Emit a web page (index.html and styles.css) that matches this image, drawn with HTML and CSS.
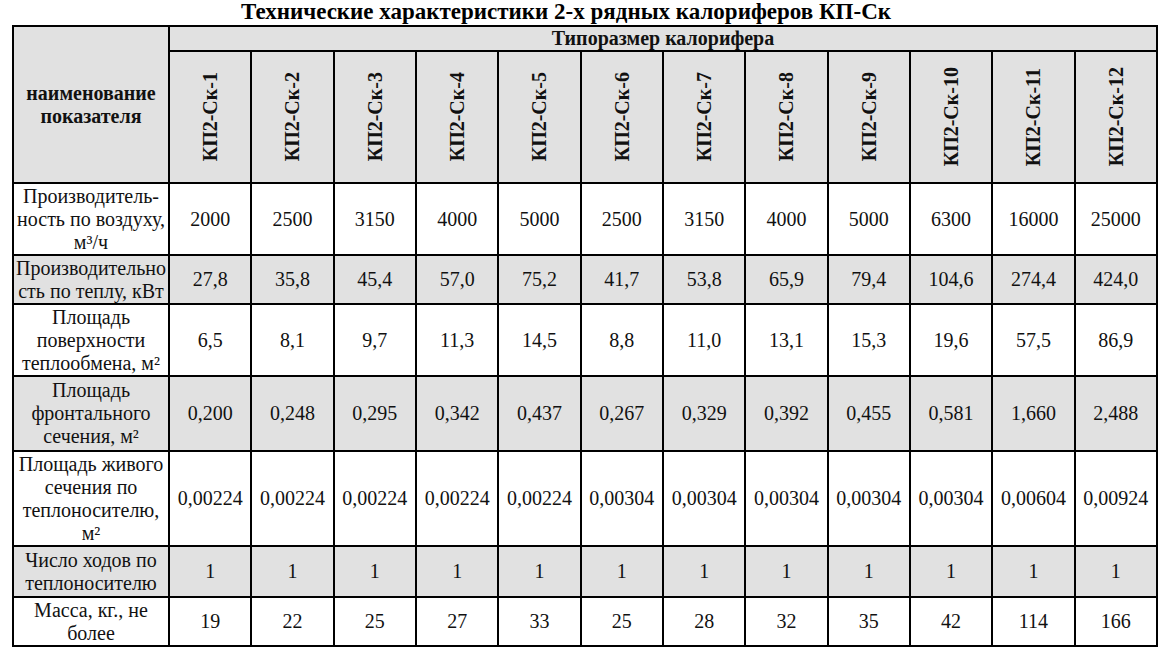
FILE: index.html
```html
<!DOCTYPE html>
<html lang="ru">
<head>
<meta charset="utf-8">
<title>Технические характеристики КП-Ск</title>
<link rel="stylesheet" href="styles.css">
</head>
<body>
<div class="page">
  <h1 class="title">Технические характеристики 2-х рядных калориферов КП-Ск</h1>
  <table class="spec">
    <colgroup>
      <col class="c-name">
      <col><col><col><col><col><col><col><col><col><col><col><col>
    </colgroup>
    <thead>
      <tr class="h1row">
        <th class="name-head" rowspan="2">наименование<br>показателя</th>
        <th class="group-head" colspan="12">Типоразмер калорифера</th>
      </tr>
      <tr class="h2row">
        <th><div class="vert">КП2-Ск-1</div></th>
        <th><div class="vert">КП2-Ск-2</div></th>
        <th><div class="vert">КП2-Ск-3</div></th>
        <th><div class="vert">КП2-Ск-4</div></th>
        <th><div class="vert">КП2-Ск-5</div></th>
        <th><div class="vert">КП2-Ск-6</div></th>
        <th><div class="vert">КП2-Ск-7</div></th>
        <th><div class="vert">КП2-Ск-8</div></th>
        <th><div class="vert">КП2-Ск-9</div></th>
        <th><div class="vert">КП2-Ск-10</div></th>
        <th><div class="vert">КП2-Ск-11</div></th>
        <th><div class="vert">КП2-Ск-12</div></th>
      </tr>
    </thead>
    <tbody>
      <tr class="r1">
        <td class="name">Производитель-<br>ность по воздуху,<br>м³/ч</td>
        <td>2000</td><td>2500</td><td>3150</td><td>4000</td><td>5000</td><td>2500</td><td>3150</td><td>4000</td><td>5000</td><td>6300</td><td>16000</td><td>25000</td>
      </tr>
      <tr class="r2 grey">
        <td class="name">Производительно<br>сть по теплу, кВт</td>
        <td>27,8</td><td>35,8</td><td>45,4</td><td>57,0</td><td>75,2</td><td>41,7</td><td>53,8</td><td>65,9</td><td>79,4</td><td>104,6</td><td>274,4</td><td>424,0</td>
      </tr>
      <tr class="r3">
        <td class="name">Площадь<br>поверхности<br>теплообмена, м²</td>
        <td>6,5</td><td>8,1</td><td>9,7</td><td>11,3</td><td>14,5</td><td>8,8</td><td>11,0</td><td>13,1</td><td>15,3</td><td>19,6</td><td>57,5</td><td>86,9</td>
      </tr>
      <tr class="r4 grey">
        <td class="name">Площадь<br>фронтального<br>сечения, м²</td>
        <td>0,200</td><td>0,248</td><td>0,295</td><td>0,342</td><td>0,437</td><td>0,267</td><td>0,329</td><td>0,392</td><td>0,455</td><td>0,581</td><td>1,660</td><td>2,488</td>
      </tr>
      <tr class="r5">
        <td class="name">Площадь живого<br>сечения по<br>теплоносителю,<br>м²</td>
        <td>0,00224</td><td>0,00224</td><td>0,00224</td><td>0,00224</td><td>0,00224</td><td>0,00304</td><td>0,00304</td><td>0,00304</td><td>0,00304</td><td>0,00304</td><td>0,00604</td><td>0,00924</td>
      </tr>
      <tr class="r6 grey">
        <td class="name">Число ходов по<br>теплоносителю</td>
        <td>1</td><td>1</td><td>1</td><td>1</td><td>1</td><td>1</td><td>1</td><td>1</td><td>1</td><td>1</td><td>1</td><td>1</td>
      </tr>
      <tr class="r7">
        <td class="name">Масса, кг., не<br>более</td>
        <td>19</td><td>22</td><td>25</td><td>27</td><td>33</td><td>25</td><td>28</td><td>32</td><td>35</td><td>42</td><td>114</td><td>166</td>
      </tr>
    </tbody>
  </table>
</div>
</body>
</html>
```

FILE: styles.css
```css
html, body {
  margin: 0;
  padding: 0;
  background: #ffffff;
}

.page {
  width: 1146px;
  margin-left: 12px;
  font-family: "Liberation Serif", "Times New Roman", serif;
  color: #111111;
}

.title {
  margin: 0;
  height: 25px;
  padding-right: 38px;
  font-size: 23px;
  line-height: 24px;
  font-weight: bold;
  text-align: center;
  color: #000000;
}

.spec {
  border-collapse: collapse;
  table-layout: fixed;
  width: 1146px;
  font-size: 20px;
  line-height: 23px;
}

.spec col.c-name {
  width: 156px;
}

.spec th,
.spec td {
  border: 2px solid #000000;
  padding: 0;
  text-align: center;
  vertical-align: middle;
  white-space: nowrap;
}

.spec thead th {
  background: #e1e1e1;
  font-weight: bold;
}

.h1row {
  height: 25px;
}

.h2row {
  height: 132px;
}

.vert {
  writing-mode: vertical-rl;
  transform: rotate(180deg);
  margin: 0 auto;
  line-height: 20px;
}

.r1 { height: 72px; }
.r2 { height: 49px; }
.r3 { height: 72px; }
.r4 { height: 75px; }
.r5 { height: 95px; }
.r6 { height: 51px; }
.r7 { height: 49px; }

.grey td {
  background: #e1e1e1;
}

.name {
  overflow: visible;
}
```
